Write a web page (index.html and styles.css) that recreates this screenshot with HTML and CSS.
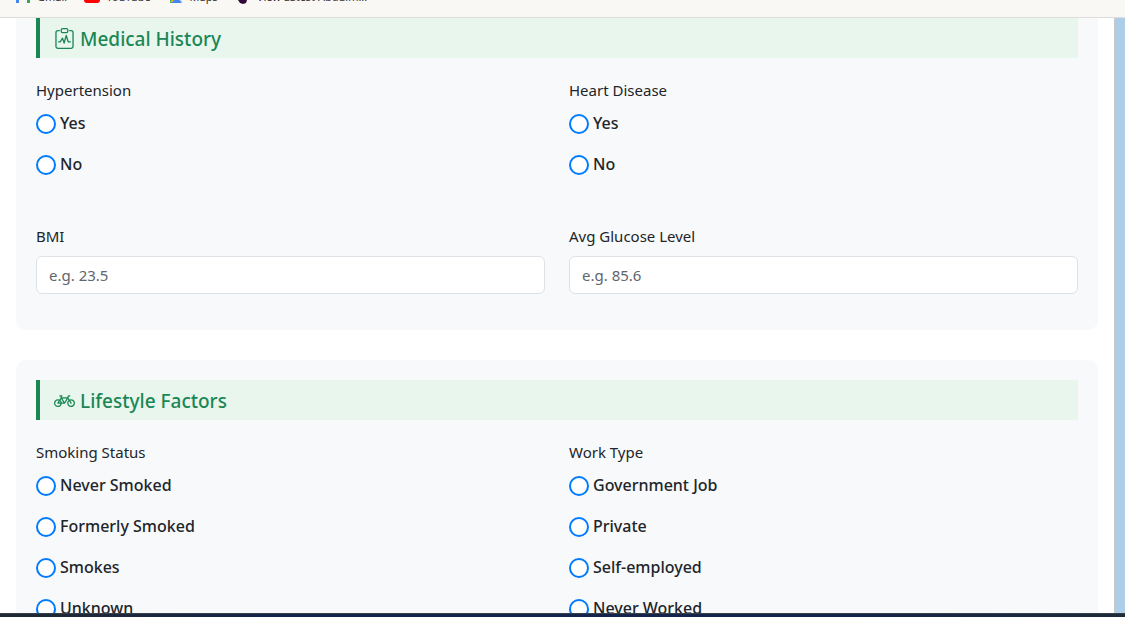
FILE: index.html
```html
<!DOCTYPE html>
<html lang="en">
<head>
<meta charset="utf-8">
<title>Health Form</title>
<link rel="stylesheet" href="styles.css">
</head>
<body>
<nav class="bookmarks" aria-label="Bookmarks">
  <a class="bookmark bookmark-gmail" href="#"><svg viewBox="0 0 16 16"><path fill="#4285f4" d="M1 3h3v11H1z"/><path fill="#34a853" d="M12 3h3v11h-3z"/><path fill="#ea4335" d="M1 3l7 6 7-6v3l-7 5-7-5z"/></svg>Gmail</a>
  <a class="bookmark bookmark-youtube" href="#"><svg viewBox="0 0 16 16"><rect x="0" y="2" width="16" height="12" rx="3" fill="#f00"/><path fill="#fff" d="M6 5l5 3-5 3z"/></svg>YouTube</a>
  <a class="bookmark bookmark-maps" href="#"><svg viewBox="0 0 16 16"><path fill="#34a853" d="M2 2h4v12H2z"/><path fill="#fbbc04" d="M2 13L13 2l1 3-9 9z"/><path fill="#d9dce0" d="M9 9l5-5v10z"/><path fill="#4285f4" d="M3 14l6-6 5 6z"/></svg>Maps</a>
  <a class="bookmark bookmark-view" href="#"><svg viewBox="0 0 16 16"><path fill="#32083a" d="M3 2h11l1 7-3 2-1 3-3 1-3-1-2-3-1-3z"/></svg>View Latest Abdulm...</a>
</nav>
<div class="window">
  <main class="page">
    <form class="form">
      <section class="card card-continued">
        <h2 class="card-title"><svg class="title-icon" viewBox="0 0 16 16" fill="none" stroke="currentColor" stroke-linecap="round" stroke-linejoin="round"><rect x="5.500" y=".5" width="5" height="3" rx="1"/><path d="M4 2H3a1.500 1.500 0 0 0-1.500 1.500V14A1.500 1.500 0 0 0 3 15.500h10a1.500 1.500 0 0 0 1.500-1.500V3.500A1.500 1.500 0 0 0 13 2h-1"/><path d="M3.500 10.500h1.200L6.500 7.800l1.200 3.700L9.300 5.700l1.500 4.800h1.700"/></svg>Medical History</h2>
        <div class="grid">
          <fieldset class="field options">
            <legend class="label">Hypertension</legend>
            <label class="option"><input type="radio" name="hypertension">Yes</label>
            <label class="option"><input type="radio" name="hypertension">No</label>
          </fieldset>
          <fieldset class="field options">
            <legend class="label">Heart Disease</legend>
            <label class="option"><input type="radio" name="heart">Yes</label>
            <label class="option"><input type="radio" name="heart">No</label>
          </fieldset>
          <div class="field">
            <label class="label" for="bmi">BMI</label>
            <input class="text-input" id="bmi" type="text" placeholder="e.g. 23.5">
          </div>
          <div class="field">
            <label class="label" for="glucose">Avg Glucose Level</label>
            <input class="text-input" id="glucose" type="text" placeholder="e.g. 85.6">
          </div>
        </div>
      </section>
      <section class="card">
        <h2 class="card-title"><svg class="title-icon" viewBox="0 0 16 16" fill="currentColor"><path d="M4 4.500a.5.5 0 0 1 .5-.5H6a.5.5 0 0 1 0 1v.500h4.140l.386-1.158A.5.5 0 0 1 11 4h1a.5.5 0 0 1 0 1h-.640l-.311.935.807 1.290a3 3 0 1 1-.848.530l-.508-.812-2.076 3.322A.5.5 0 0 1 8 10.500H5.959a3 3 0 1 1-1.815-3.274L5 5.856V5h-.5a.5.5 0 0 1-.5-.5m1.500 2.443-.508.814c.500.444.850 1.054.967 1.743h1.139zM8 9.057 9.598 6.500H6.402zM4.937 9.500a2 2 0 0 0-.487-.877l-.548.877zM3.603 8.092A2 2 0 1 0 4.937 10.500H3a.5.5 0 0 1-.424-.765zm7.947.530a2 2 0 1 0 .848-.530l1.026 1.643a.5.5 0 1 1-.848.530z"/></svg>Lifestyle Factors</h2>
        <div class="grid">
          <fieldset class="field options">
            <legend class="label">Smoking Status</legend>
            <label class="option"><input type="radio" name="smoking">Never Smoked</label>
            <label class="option"><input type="radio" name="smoking">Formerly Smoked</label>
            <label class="option"><input type="radio" name="smoking">Smokes</label>
            <label class="option"><input type="radio" name="smoking">Unknown</label>
          </fieldset>
          <fieldset class="field options">
            <legend class="label">Work Type</legend>
            <label class="option"><input type="radio" name="work">Government Job</label>
            <label class="option"><input type="radio" name="work">Private</label>
            <label class="option"><input type="radio" name="work">Self-employed</label>
            <label class="option"><input type="radio" name="work">Never Worked</label>
          </fieldset>
        </div>
      </section>
    </form>
  </main>
  <div class="desktop"></div>
</div>
<footer class="taskbar"></footer>
</body>
</html>
```
FILE: styles.css
```css
* { box-sizing: border-box; }
body {
  margin: 0;
  height: 100vh;
  display: flex;
  flex-direction: column;
  overflow: hidden;
  font-family: "Noto Sans", "Open Sans", sans-serif;
  font-size: 15px;
  line-height: 24px;
  color: #212529;
  background: #fff;
}
.bookmarks {
  flex: none;
  height: 18px;
  display: flex;
  align-items: flex-end;
  gap: 17px;
  padding: 0 15px 12px;
  overflow: hidden;
  background: #faf8f4;
  border-bottom: 1px solid #dedddb;
}
.bookmark {
  display: flex;
  align-items: center;
  gap: 6px;
  font-size: 11px;
  line-height: 16px;
  color: #333;
  text-decoration: none;
  white-space: nowrap;
}
.bookmark svg { width: 16px; height: 16px; }
.window { flex: 1; min-height: 0; display: flex; }
.page { flex: 1; overflow: hidden; padding: 0 16px; }
.desktop { width: 11px; background: #aecde8; border-left: 1px solid #c8c8c8; }
.taskbar { flex: none; height: 4px; background: linear-gradient(90deg, #202a33, #14244c 25%, #14244c 75%, #1e2b38); border-top: 1px solid #3a4047; }
.card { margin-bottom: 30px; padding: 20px; background: #f8f9fb; border-radius: 10px; }
.card-continued { padding-top: 0; border-radius: 0 0 10px 10px; }
.card-title {
  display: flex;
  align-items: center;
  gap: 5px;
  height: 40px;
  margin: 0 0 20px;
  padding: 1px 14px 0;
  border-left: 4px solid #198754;
  background: #e9f6ee;
  color: #198754;
  font-size: 19px;
  font-weight: 500;
}
.title-icon { width: 21px; height: 21px; }
.grid { display: grid; grid-template-columns: 1fr 1fr; column-gap: 24px; }
.field { min-width: 0; margin: 0 0 16px; padding: 0; border: 0; }
.options { margin-bottom: 32px; }
.label { display: block; margin-bottom: 8px; padding: 0; }
.option { display: flex; align-items: center; gap: 4px; height: 25px; margin-bottom: 16px; font-size: 16px; font-weight: 500; }
.option input {
  appearance: none;
  width: 20px;
  height: 20px;
  margin: 2px 0 0;
  border: 2px solid #007bff;
  border-radius: 50%;
  background: #fff;
}
.text-input {
  display: block;
  width: 100%;
  height: 38px;
  padding: 6px 12px;
  border: 1px solid #dee2e6;
  border-radius: 6px;
  background: #fff;
  color: #212529;
  font: inherit;
}
.text-input::placeholder { color: #5f666d; opacity: 1; }
```
